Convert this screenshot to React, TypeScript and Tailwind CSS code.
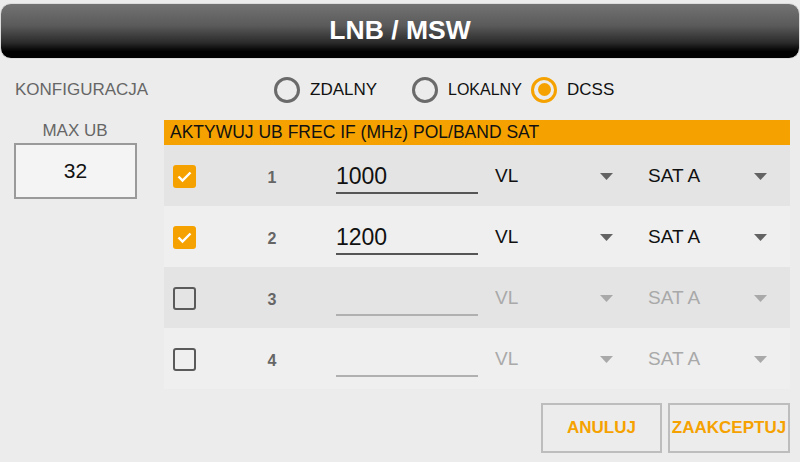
import React from 'react';

type Row = { n: number; active: boolean; freq: string };

const rows: Row[] = [
  { n: 1, active: true, freq: '1000' },
  { n: 2, active: true, freq: '1200' },
  { n: 3, active: false, freq: '' },
  { n: 4, active: false, freq: '' },
];

function Radio({ label, checked, size = 'text-[17px]' }: { label: string; checked?: boolean; size?: string }) {
  return (
    <div className="flex items-center gap-[10px]">
      {checked ? (
        <div className="w-[26px] h-[26px] rounded-full border-[3px] border-[#f5a200] flex items-center justify-center">
          <div className="w-[13px] h-[13px] rounded-full bg-[#f5a200]" />
        </div>
      ) : (
        <div className="w-[26px] h-[26px] rounded-full border-[3px] border-[#6a6a6a]" />
      )}
      <span className={`${size} text-[#111]`}>{label}</span>
    </div>
  );
}

function Check({ on }: { on: boolean }) {
  if (!on) {
    return <div className="w-[23px] h-[23px] rounded-[3px] border-2 border-[#5a5a5a]" />;
  }
  return (
    <div className="w-[23px] h-[23px] rounded-[3px] bg-[#f5a200] flex items-center justify-center">
      <svg width="23" height="23" viewBox="0 0 23 23">
        <polyline points="5.5,11.5 9.5,15.5 17.5,7.5" fill="none" stroke="#fff" strokeWidth="2.4" />
      </svg>
    </div>
  );
}

function Arrow({ color }: { color: string }) {
  return (
    <svg width="13" height="7" viewBox="0 0 13 7">
      <polygon points="0,0 13,0 6.5,7" fill={color} />
    </svg>
  );
}

export default function App() {
  return (
    <div
      className="w-[800px] h-[462px] bg-[#ececec] overflow-hidden flex flex-col"
      style={{ fontFamily: '"Liberation Sans", Arial, sans-serif' }}
    >
      {/* Title bar */}
      <div className="mt-[3px] h-[56px] rounded-[11px] border border-[#dcdcdc] bg-[linear-gradient(to_bottom,#737373_0%,#5a5a5a_40%,#2a2a2a_72%,#000_88%,#000_100%)] flex items-center justify-center">
        <span className="text-white font-bold text-[26.5px]">LNB / MSW</span>
      </div>

      {/* Config row */}
      <div className="h-[61px] flex items-center">
        <div className="w-[274px] pl-[15px] text-[17px] text-[#666]">KONFIGURACJA</div>
        <div className="w-[138px]">
          <Radio label="ZDALNY" />
        </div>
        <div className="w-[119px]">
          <Radio label="LOKALNY" size="text-[16px]" />
        </div>
        <Radio label="DCSS" checked />
      </div>

      <div className="flex">
        {/* Left column */}
        <div className="w-[164px] flex flex-col">
          <div className="w-[150px] pt-[1px] text-center text-[17px] leading-[20px] text-[#666]">MAX UB</div>
          <div className="ml-[14px] mt-[2px] w-[123px] h-[56px] border-2 border-[#9a9a9a] bg-[#f4f4f4] flex items-center justify-center text-[21px] text-[#111]">
            32
          </div>
        </div>

        {/* Table */}
        <div className="w-[626px] flex flex-col">
          <div className="h-[25px] bg-[#f5a200] flex items-center pl-[6px] text-[17.5px] text-[#111]">
            AKTYWUJ UB FREC IF (MHz) POL/BAND SAT
          </div>
          {rows.map((r, i) => {
            const txt = r.active ? 'text-[#111]' : 'text-[#a9a9a9]';
            const arrow = r.active ? '#636363' : '#a9a9a9';
            return (
              <div
                key={r.n}
                className={`h-[61px] pt-[2px] flex items-center ${i % 2 === 0 ? 'bg-[#e4e4e4]' : 'bg-[#efefef]'}`}
              >
                <div className="ml-[9px]">
                  <Check on={r.active} />
                </div>
                <div className="ml-[56px] w-[40px] pt-[2px] text-center text-[16px] font-bold text-[#666]">{r.n}</div>
                <div
                  className={`ml-[44px] w-[142px] h-[34px] flex items-center border-b-2 text-[23px] leading-[32px] ${
                    r.active ? 'border-[#555] text-[#111]' : 'border-[#b0b0b0]'
                  }`}
                >
                  {r.freq}
                </div>
                <div className={`ml-[17px] w-[118px] flex items-center justify-between text-[19px] ${txt}`}>
                  <span>VL</span>
                  <Arrow color={arrow} />
                </div>
                <div className={`ml-[35px] w-[119px] flex items-center justify-between text-[19px] ${txt}`}>
                  <span>SAT A</span>
                  <Arrow color={arrow} />
                </div>
              </div>
            );
          })}

          {/* Buttons */}
          <div className="mt-[14px] flex justify-end gap-[6px]">
            <button className="w-[121px] h-[50px] border-2 border-[#bdbdbd] text-[17px] font-bold text-[#f5a200]">
              ANULUJ
            </button>
            <button className="w-[122px] h-[50px] border-2 border-[#bdbdbd] text-[17px] font-bold text-[#f5a200] whitespace-nowrap">
              ZAAKCEPTUJ
            </button>
          </div>
        </div>
      </div>
    </div>
  );
}
